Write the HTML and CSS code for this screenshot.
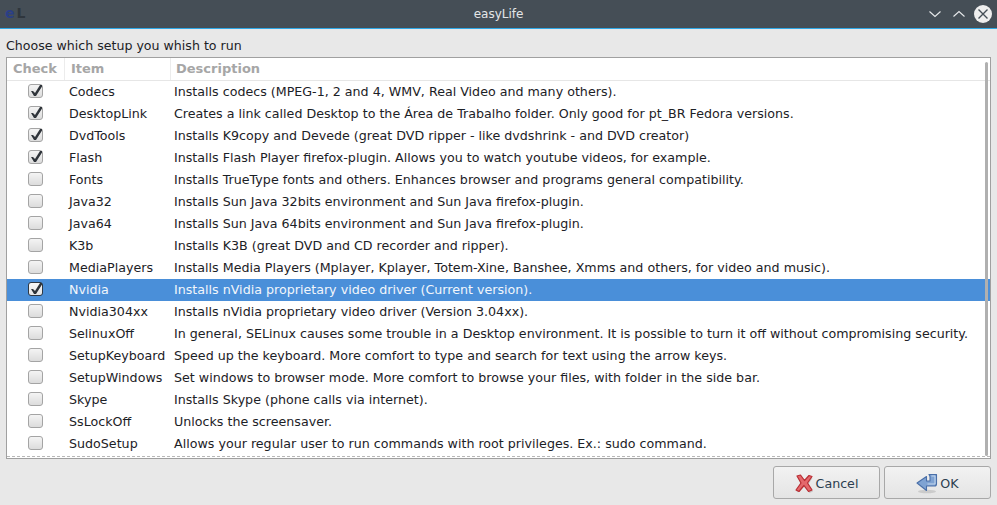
FILE: index.html
```html
<!DOCTYPE html>
<html lang="en">
<head>
<meta charset="utf-8">
<title>easyLife</title>
<link rel="stylesheet" href="styles.css">
</head>
<body>
<div class="window">
  <header class="titlebar">
    <span class="app-icon"><span class="app-e">e</span><span class="app-l">L</span></span>
    <span class="title">easyLife</span>
    <div class="controls">
      <svg class="ctl" width="12" height="8" viewBox="0 0 12 8"><path d="M.5 1.5 6 6.500 11.500 1.500" fill="none" stroke="#e8eaec" stroke-width="1.100"/></svg>
      <svg class="ctl" width="12" height="8" viewBox="0 0 12 8"><path d="M.5 6.500 6 1.500 11.500 6.500" fill="none" stroke="#e8eaec" stroke-width="1.100"/></svg>
      <svg class="close" width="18" height="18" viewBox="0 0 18 18"><circle cx="9" cy="9" r="9" fill="#eeeeee"/><path d="M4.500 4.500 13.500 13.500M13.500 4.500 4.500 13.500" stroke="#454e56" stroke-width="1.400"/></svg>
    </div>
  </header>
  <main class="content">
    <div class="prompt">Choose which setup you whish to run</div>
    <section class="list">
      <div class="head">
        <div class="hc c1">Check</div>
        <div class="hc c2">Item</div>
        <div class="hc c3">Description</div>
      </div>
      <div class="row"><span class="box on"></span><span class="item">Codecs</span><span class="desc">Installs codecs (MPEG-1, 2 and 4, WMV, Real Video and many others).</span></div>
      <div class="row"><span class="box on"></span><span class="item">DesktopLink</span><span class="desc">Creates a link called Desktop to the Área de Trabalho folder. Only good for pt_BR Fedora versions.</span></div>
      <div class="row"><span class="box on"></span><span class="item">DvdTools</span><span class="desc">Installs K9copy and Devede (great DVD ripper - like dvdshrink - and DVD creator)</span></div>
      <div class="row"><span class="box on"></span><span class="item">Flash</span><span class="desc">Installs Flash Player firefox-plugin. Allows you to watch youtube videos, for example.</span></div>
      <div class="row"><span class="box"></span><span class="item">Fonts</span><span class="desc">Installs TrueType fonts and others. Enhances browser and programs general compatibility.</span></div>
      <div class="row"><span class="box"></span><span class="item">Java32</span><span class="desc">Installs Sun Java 32bits environment and Sun Java firefox-plugin.</span></div>
      <div class="row"><span class="box"></span><span class="item">Java64</span><span class="desc">Installs Sun Java 64bits environment and Sun Java firefox-plugin.</span></div>
      <div class="row"><span class="box"></span><span class="item">K3b</span><span class="desc">Installs K3B (great DVD and CD recorder and ripper).</span></div>
      <div class="row"><span class="box"></span><span class="item">MediaPlayers</span><span class="desc">Installs Media Players (Mplayer, Kplayer, Totem-Xine, Banshee, Xmms and others, for video and music).</span></div>
      <div class="row selected"><span class="box on"></span><span class="item">Nvidia</span><span class="desc">Installs nVidia proprietary video driver (Current version).</span></div>
      <div class="row"><span class="box"></span><span class="item">Nvidia304xx</span><span class="desc">Installs nVidia proprietary video driver (Version 3.04xx).</span></div>
      <div class="row"><span class="box"></span><span class="item">SelinuxOff</span><span class="desc">In general, SELinux causes some trouble in a Desktop environment. It is possible to turn it off without compromising security.</span></div>
      <div class="row"><span class="box"></span><span class="item">SetupKeyboard</span><span class="desc">Speed up the keyboard. More comfort to type and search for text using the arrow keys.</span></div>
      <div class="row"><span class="box"></span><span class="item">SetupWindows</span><span class="desc">Set windows to browser mode. More comfort to browse your files, with folder in the side bar.</span></div>
      <div class="row"><span class="box"></span><span class="item">Skype</span><span class="desc">Installs Skype (phone calls via internet).</span></div>
      <div class="row"><span class="box"></span><span class="item">SsLockOff</span><span class="desc">Unlocks the screensaver.</span></div>
      <div class="row"><span class="box"></span><span class="item">SudoSetup</span><span class="desc">Allows your regular user to run commands with root privileges. Ex.: sudo command.</span></div>
      <div class="scrollthumb"></div>
    </section>
    <footer class="actions">
      <button class="btn">
        <svg width="19" height="20" viewBox="0 0 19 20"><path d="M3 18.500 9 13 14.500 19 18 17.500 13 11 17.500 4 14.500 3 9.500 8 6 2.500 3 3.500 6.500 11 1.500 17.500Z" fill="#000" opacity=".14"/><path d="M2 2 5.500 1 9.500 6.500 14 1.500 17 2.500 12.500 9 17 16 13.500 17.500 9 11.500 4 17.500 1 16 6 9Z" fill="#e4686c" stroke="#b92d33" stroke-width="1.200" stroke-linejoin="round"/></svg>
        <span>Cancel</span>
      </button>
      <button class="btn">
        <svg width="22" height="21" viewBox="0 0 22 21"><ellipse cx="11" cy="18.500" rx="9" ry="1.800" fill="#000" opacity=".12"/><path d="M13 1.500H20.500V11Q20.500 13 18.500 13H10.500V17.500L1 10 10.500 3.500V8H14V4Q14 2.500 13 1.500Z" fill="#7fa3d3" stroke="#4a6fa8" stroke-width="1.100" stroke-linejoin="round"/><path d="M15.500 3H19V11H11.500" fill="none" stroke="#c4d6ec" stroke-width="1"/></svg>
        <span>OK</span>
      </button>
    </footer>
  </main>
</div>
</body>
</html>
```

FILE: styles.css
```css
* { box-sizing: border-box; }
html, body { margin: 0; height: 100%; }
body { font-family: "DejaVu Sans", sans-serif; font-size: 12.67px; color: #1c2126; background: #e8e8e8; overflow: hidden; }
.window { width: 997px; height: 505px; display: flex; flex-direction: column; overflow: hidden; }
.titlebar { position: relative; height: 29px; flex: none; background: #454e56; border-bottom: 1px solid #2fa8e6; display: flex; align-items: center; justify-content: center; }
.app-icon { position: absolute; left: 5px; top: 5px; font-size: 14px; font-weight: bold; display: flex; gap: 2px; line-height: 17px; }
.app-e { color: #2b3f86; }
.app-l { color: #2f363d; }
.title { color: #e4e6e8; font-size: 12px; }
.controls { position: absolute; right: 5px; top: 5px; display: flex; align-items: center; gap: 12px; }
.ctl { display: block; }
.close { display: block; margin-left: -3px; }
.content { flex: 1; display: flex; flex-direction: column; padding: 0 6px; }
.prompt { height: 28px; line-height: 33px; font-size: 12.6px; flex: none; }
.list { position: relative; height: 402px; flex: none; background: #fff; border: 1px solid #a0a0a0; overflow: hidden; }
.head { height: 23px; display: flex; border-bottom: 1px solid #e6e6e6; font-weight: bold; color: #a6a6a6; font-size: 13px; }
.hc { line-height: 21px; border-right: 1px solid #ececec; padding-left: 6px; }
.c1 { width: 58px; }
.c2 { width: 106px; }
.c3 { flex: 1; border-right: 0; padding-left: 5px; }
.row { height: 22px; padding-bottom: 2px; display: flex; align-items: center; color: #1c2126; white-space: nowrap; }
.row.selected { background: #4a8fd9; color: #f2f6fb; }
.box { width: 15px; height: 14px; margin-left: 21px; margin-right: 26px; flex: none; border: 1px solid #a4a4a4; border-radius: 3px; background: linear-gradient(#f4f4f4, #dcdcdc); position: relative; }
.box.on::after { content: ""; position: absolute; inset: 0; background: #2f343a; clip-path: polygon(2px 6px, 4px 6px, 6px 8px, 11px 0, 14px 0, 7px 11px, 5px 11px); }
.selected .box { border-color: #2e3742; background: linear-gradient(#f8f8f8, #e6e6e6); }
.item { width: 105px; flex: none; }
.desc { flex: 1; }
.list::after { content: ""; position: absolute; left: 0; right: 0; bottom: 1px; height: 0; border-bottom: 1px dashed #b8b8b8; }
.scrollthumb { position: absolute; right: 2px; top: 4px; width: 3px; height: 394px; background: #b0b0b0; border-radius: 2px; }
.actions { flex: 1; display: flex; justify-content: flex-end; gap: 4px; padding-top: 7px; }
.btn { width: 107px; height: 33px; display: flex; align-items: center; justify-content: center; gap: 2px; border: 1px solid #a8a8a8; border-radius: 3px; background: linear-gradient(#f2f2f2, #e4e4e4); font: 12.67px "DejaVu Sans", sans-serif; color: #2c3e50; padding: 2px 0 0; }
```
